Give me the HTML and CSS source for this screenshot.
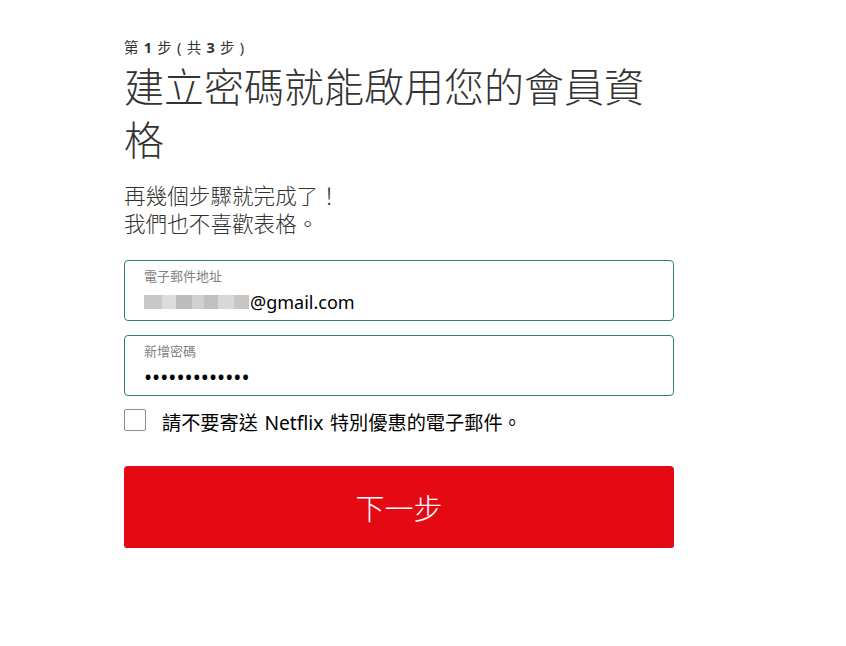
FILE: index.html
```html
<!DOCTYPE html>
<html lang="zh-Hant">
<head>
<meta charset="utf-8">
<title>建立密碼</title>
<link rel="stylesheet" href="styles.css">
</head>
<body>
<main class="page">
  <div class="form">
    <div class="step">第 <b>1</b> 步 ( 共 <b>3</b> 步 )</div>
    <h1 class="title">建立密碼就能啟用您的會員資格</h1>
    <p class="context">再幾個步驟就完成了！<br>我們也不喜歡表格。</p>

    <div class="field">
      <span class="label">電子郵件地址</span>
      <span class="value"><span class="blur"><i class="b1"></i><i class="b2"></i><i class="b3"></i><i class="b4"></i><i class="b5"></i><i class="b6"></i><i class="b7"></i></span>@gmail.com</span>
    </div>

    <div class="field">
      <span class="label">新增密碼</span>
      <span class="value dots">•••••••••••••</span>
    </div>

    <label class="check">
      <span class="box"></span>
      <span class="check-text">請不要寄送 Netflix 特別優惠的電子郵件。</span>
    </label>

    <button class="next">下一步</button>
  </div>
</main>
</body>
</html>
```

FILE: styles.css
```css
html, body {
  margin: 0;
  padding: 0;
  background: #fff;
}
body {
  font-family: "Noto Sans", "Noto Sans CJK TC", sans-serif;
  color: #333;
}
.page {
  padding: 37px 0 0 124px;
}
.form {
  width: 550px;
  display: flex;
  flex-direction: column;
}
.step {
  font-size: 14.5px;
  line-height: 20px;
  color: #333;
  word-spacing: 1.5px;
}
.step b {
  font-weight: 700;
}
.title {
  margin: 3px 0 0;
  font-size: 40px;
  font-weight: 300;
  line-height: 53px;
  color: #333;
}
.context {
  margin: 16px 0 0;
  font-size: 21.6px;
  font-weight: 300;
  line-height: 28px;
  color: #333;
}
.field {
  margin-top: 22px;
  height: 61px;
  box-sizing: border-box;
  border: 1px solid #2e8660;
  border-radius: 4px;
  padding: 6px 19px 0;
  display: flex;
  flex-direction: column;
}
.field + .field {
  margin-top: 14px;
}
.label {
  font-size: 13px;
  line-height: 18px;
  color: #808080;
}
.value {
  margin-top: 4px;
  font-size: 18px;
  line-height: 26px;
  color: #000;
  display: flex;
  align-items: center;
}
.dots {
  font-size: 21.6px;
  letter-spacing: 0;
}
.blur {
  display: inline-flex;
  align-items: center;
  height: 18px;
  margin-right: 1px;
  filter: blur(0.6px);
}
.blur i {
  display: block;
  height: 14px;
}
.b1 { width: 18px; background: #c8c8c8; }
.b2 { width: 14px; background: #dcdcdc; }
.b3 { width: 16px; background: #bcbcbc; }
.b4 { width: 12px; background: #d0d0d0; }
.b5 { width: 14px; background: #c0c0c0; }
.b6 { width: 16px; background: #d8d8d8; }
.b7 { width: 15px; background: #c6c6c6; }
.check {
  margin-top: 13px;
  display: flex;
  align-items: flex-start;
  gap: 16px;
}
.box {
  width: 20px;
  height: 20px;
  border: 1px solid #8c8c8c;
  border-radius: 2px;
  flex: none;
}
.check-text {
  font-size: 19.2px;
  line-height: 26px;
  margin-top: 1px;
  color: #000;
  word-spacing: 1.5px;
}
.next {
  margin-top: 30px;
  height: 82px;
  border: none;
  border-radius: 4px;
  background: #e50914;
  color: #fff;
  font-family: "Noto Sans", "Noto Sans CJK TC", sans-serif;
  font-size: 29px;
  font-weight: 300;
  box-shadow: 0 1px 0 rgba(0,0,0,0.45);
  cursor: pointer;
}
```
